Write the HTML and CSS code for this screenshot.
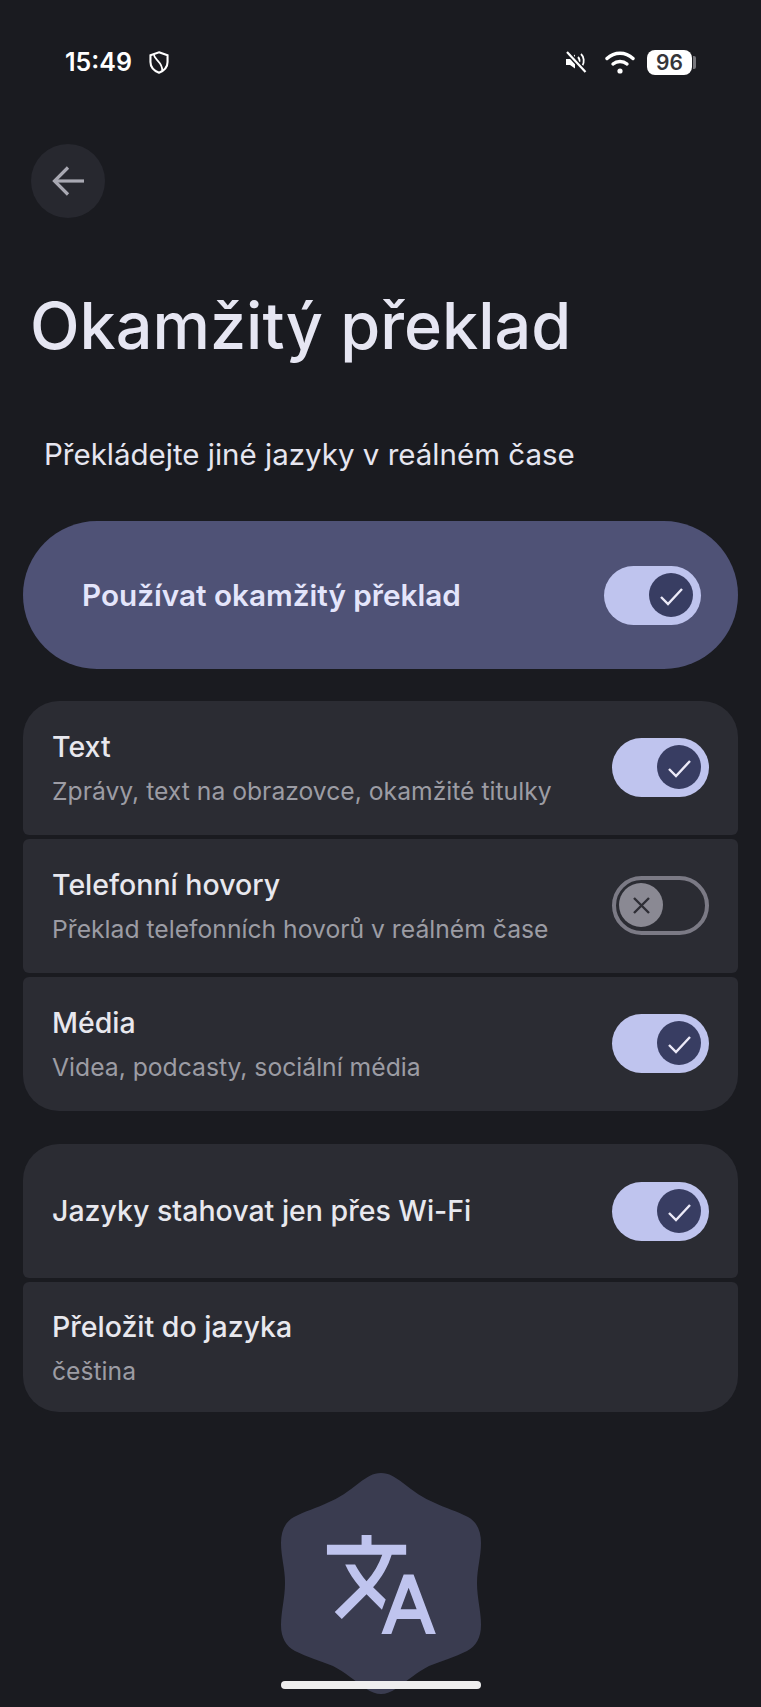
FILE: index.html
```html
<!DOCTYPE html>
<html lang="cs">
<head>
  <meta charset="UTF-8" />
  <title>Okamžitý překlad</title>
  <link rel="stylesheet" href="styles.css">
</head>
<body>
  <div class="page">
    <div class="statusBar">
      <div class="statusLeft">
        <span class="time">15:49</span>
        <svg class="shield" width="20" height="23" viewBox="0 0 18 21" fill="none" stroke="#fff" stroke-width="1.9">
          <path d="M9 1.2 L16.8 3.8 V10 C16.8 15 13.5 18 9 19.8 C4.5 18 1.2 15 1.2 10 V3.8 Z"/>
          <path d="M4.5 3.5 C4.5 8 12.5 10 12 18" stroke-width="1.6"/>
        </svg>
      </div>
      <div class="statusRight">
        <svg class="mute" width="22" height="22" viewBox="0 0 22 22" fill="none">
          <path d="M1 8 H5 L10 3.5 V17.5 L5 14 H1 Z" fill="#fff"/>
          <path d="M13 6 C14.6 7.6 14.8 10 14 12 M16 3 C19.2 6 19.5 11 17.4 14.5" stroke="#fff" stroke-width="1.8"/>
          <path d="M2.5 1.5 L20.5 21" stroke="#1a1b20" stroke-width="5"/>
          <path d="M2 1 L20.5 21" stroke="#fff" stroke-width="2.2"/>
        </svg>
        <svg class="wifi" width="30" height="23" viewBox="0 0 30 23" fill="none" stroke="#fff" stroke-width="3.4" stroke-linecap="round">
          <path d="M2 7.5 C9.5 0.5 20.5 0.5 28 7.5"/>
          <path d="M8 13 C12 9.6 18 9.6 22 13"/>
          <circle cx="15" cy="20" r="2.6" fill="#fff" stroke="none"/>
        </svg>
        <div class="batteryWrap">
          <div class="battery">96</div>
          <div class="batteryCap"></div>
        </div>
      </div>
    </div>

    <div class="backBtn">
      <svg width="32" height="30" viewBox="0 0 32 30" fill="none" stroke="#a9a9b3" stroke-width="3.2">
        <path d="M16 1.5 L2.5 15 L16 28.5"/>
        <path d="M3 15 H32"/>
      </svg>
    </div>

    <h1 class="title">Okamžitý překlad</h1>
    <p class="subtitle">Překládejte jiné jazyky v reálném čase</p>

    <div class="mainCard">
      <span class="mainLabel">Používat okamžitý překlad</span>
      <div class="switch on">
        <div class="thumb">
          <svg width="44" height="44" viewBox="0 0 44 44" fill="none" stroke="#eceaf8" stroke-width="2.4"><path d="M12 24 L19 31 L33 16"/></svg>
        </div>
      </div>
    </div>

    <div class="group">
      <div class="row">
        <div class="rowText">
          <div class="rowTitle">Text</div>
          <div class="rowSub">Zprávy, text na obrazovce, okamžité titulky</div>
        </div>
        <div class="switch on">
          <div class="thumb">
            <svg width="44" height="44" viewBox="0 0 44 44" fill="none" stroke="#eceaf8" stroke-width="2.4"><path d="M12 24 L19 31 L33 16"/></svg>
          </div>
        </div>
      </div>
      <div class="row">
        <div class="rowText">
          <div class="rowTitle">Telefonní hovory</div>
          <div class="rowSub">Překlad telefonních hovorů v reálném čase</div>
        </div>
        <div class="switch off">
          <div class="thumb">
            <svg width="44" height="44" viewBox="0 0 44 44" fill="none" stroke="#2e2e35" stroke-width="2.4"><path d="M15 15 L30 30 M30 15 L15 30"/></svg>
          </div>
        </div>
      </div>
      <div class="row">
        <div class="rowText">
          <div class="rowTitle">Média</div>
          <div class="rowSub">Videa, podcasty, sociální média</div>
        </div>
        <div class="switch on">
          <div class="thumb">
            <svg width="44" height="44" viewBox="0 0 44 44" fill="none" stroke="#eceaf8" stroke-width="2.4"><path d="M12 24 L19 31 L33 16"/></svg>
          </div>
        </div>
      </div>
    </div>

    <div class="group second">
      <div class="row flat">
        <div class="rowText single">
          <div class="rowTitle">Jazyky stahovat jen přes Wi-Fi</div>
        </div>
        <div class="switch on">
          <div class="thumb">
            <svg width="44" height="44" viewBox="0 0 44 44" fill="none" stroke="#eceaf8" stroke-width="2.4"><path d="M12 24 L19 31 L33 16"/></svg>
          </div>
        </div>
      </div>
      <div class="row short">
        <div class="rowText">
          <div class="rowTitle">Přeložit do jazyka</div>
          <div class="rowSub">čeština</div>
        </div>
      </div>
    </div>

    <svg class="hero" width="200" height="221" viewBox="0 0 200 221">
      <path fill="#3a3c50" d="M100 0 C92 0 86 4 78 10 C68 18 58 25 46 30 C36 35 24 38 13 44 C4 49 0 58 0 70 C0 84 4 95 4 110 C4 125 0 138 0 152 C0 165 5 173 14 178 C26 184 40 188 52 193 C64 199 74 208 84 215 C90 219 95 221 100 221 C105 221 110 219 116 215 C126 208 136 199 148 193 C160 188 174 184 186 178 C195 173 200 165 200 152 C200 138 196 125 196 110 C196 95 200 84 200 70 C200 58 196 49 187 44 C176 38 164 35 154 30 C142 25 132 18 122 10 C114 4 108 0 100 0 Z"/>
      <path transform="translate(41 52) scale(4.95)" fill="#bfc4ee" d="M12.87 15.07l-2.54-2.51.03-.03c1.74-1.94 2.98-4.17 3.71-6.53H17V4h-7V2H8v2H1v1.99h11.17C11.5 7.92 10.44 9.75 9 11.35 8.07 10.32 7.3 9.19 6.69 8h-2c.73 1.63 1.73 3.17 2.98 4.56l-5.09 5.02L4 19l5-5 3.11 3.11.76-2.04zM18.5 10h-2L12 22h2l1.12-3h4.75L21 22h2l-4.5-12zm-2.62 7l1.62-4.33L19.12 17h-3.24z"/>
    </svg>

    <div class="homeBar"></div>
  </div>
</body>
</html>
```

FILE: styles.css
```css
* {
  margin: 0;
  padding: 0;
  box-sizing: border-box;
}

body {
  background: #1a1b20;
  font-family: Inter, sans-serif;
}

.page {
  position: relative;
  width: 761px;
  height: 1707px;
  overflow: hidden;
  background: #1a1b20;
}

.statusBar {
  display: flex;
  justify-content: space-between;
  align-items: center;
  height: 26px;
  margin-top: 49px;
  padding: 0 65px 0 65px;
}

.statusLeft, .statusRight {
  display: flex;
  align-items: center;
}

.time {
  color: #fff;
  font-size: 25px;
  font-weight: 600;
}

.shield {
  margin-left: 17px;
}

.mute {
  margin-right: 18px;
}

.wifi {
  margin-right: 12px;
}

.batteryWrap {
  display: flex;
  align-items: center;
  gap: 1px;
}

.battery {
  width: 45px;
  height: 25px;
  border-radius: 8px;
  background: #fff;
  color: #35353a;
  font-size: 21px;
  font-weight: 600;
  line-height: 25px;
  text-align: center;
}

.batteryCap {
  width: 3px;
  height: 13px;
  background: #77777c;
  border-radius: 0 2px 2px 0;
}

.backBtn {
  display: flex;
  align-items: center;
  justify-content: center;
  width: 74px;
  height: 74px;
  margin: 69px 0 0 31px;
  border-radius: 50%;
  background: #27282f;
}

.title {
  margin: 63px 0 0 30px;
  color: #e6e6f2;
  font-size: 64.7px;
  font-weight: 500;
  line-height: 90px;
}

.subtitle {
  margin: 63px 0 0 44px;
  color: #e6e6f0;
  font-size: 29.5px;
  line-height: 40px;
}

.mainCard {
  display: flex;
  align-items: center;
  justify-content: space-between;
  height: 148px;
  margin: 47px 23px 0;
  padding: 0 37px 0 59px;
  border-radius: 74px;
  background: #4f5276;
}

.mainLabel {
  color: #e4e5fb;
  font-size: 29.7px;
  font-weight: 600;
}

.group {
  display: flex;
  flex-direction: column;
  gap: 4px;
  margin: 32px 23px 0;
  border-radius: 36px;
  overflow: hidden;
}

.group.second {
  margin-top: 33px;
}

.row {
  display: flex;
  align-items: center;
  justify-content: space-between;
  height: 134px;
  padding: 0 29px 2px 29px;
  border-radius: 6px;
  background: #2b2c33;
}

.row.flat {
  padding-bottom: 0;
}

.row.short {
  height: 130px;
  padding-bottom: 0;
}

.rowText {
  padding-top: 1px;
}

.rowText.single {
  padding-top: 0;
}

.rowTitle {
  color: #e8e8ee;
  font-size: 28.5px;
  font-weight: 500;
  line-height: 40px;
}

.rowSub {
  margin-top: 6px;
  color: #9c9ca4;
  font-size: 24.7px;
  line-height: 36px;
}

.switch {
  display: flex;
  align-items: center;
  flex-shrink: 0;
  width: 97px;
  height: 59px;
  padding: 0 8px;
  border-radius: 30px;
}

.switch.on {
  justify-content: flex-end;
  background: #bfc4ee;
}

.switch.off {
  justify-content: flex-start;
  padding: 0 3px;
  border: 4px solid #7b7a85;
}

.thumb {
  width: 44px;
  height: 44px;
  border-radius: 50%;
}

.switch.on .thumb {
  background: #383d62;
}

.switch.off .thumb {
  background: #8a8993;
}

.hero {
  display: block;
  margin: 61px auto 0;
}

.homeBar {
  position: absolute;
  left: 281px;
  top: 1681px;
  width: 200px;
  height: 8px;
  border-radius: 4px;
  background: #eeeeee;
}
```
